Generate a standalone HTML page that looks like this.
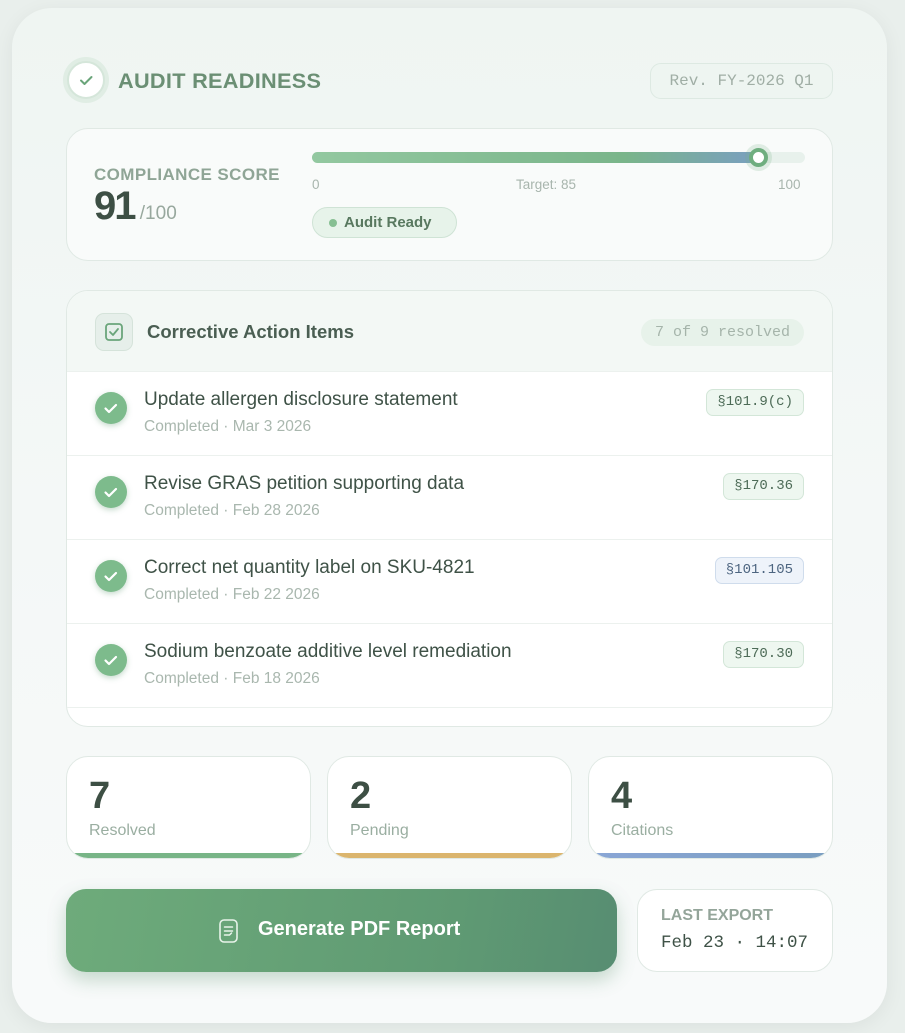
<!DOCTYPE html>
<html><head><meta charset="utf-8"><style>
*{box-sizing:border-box;margin:0;padding:0}
body{width:905px;height:1033px;background:#e9efec;font-family:"Liberation Sans",sans-serif;position:relative;overflow:hidden}
.card{position:absolute;left:12px;top:8px;width:875px;height:1015px;border-radius:40px;background:linear-gradient(180deg,#eff5f2 0%,#f4f8f7 50%,#f8fafa 100%);box-shadow:0 4px 20px rgba(0,0,0,.06)}
.abs{position:absolute}
.mono{font-family:"Liberation Mono",monospace}
.box{position:absolute;background:#fff;border:1px solid #e0e9e4;border-radius:22px}
.row{position:absolute;left:0;width:100%;height:84px;border-top:1px solid #ecf1ee}
.chk{position:absolute;left:28px;top:20px;width:32px;height:32px;border-radius:50%;background:#7dbb8c;box-shadow:0 2px 6px rgba(90,150,110,.35)}
.rt{position:absolute;left:77px;top:17px;font-size:19px;color:#3f5247}
.rs{position:absolute;left:77px;top:46px;font-size:15.5px;color:#a9b7ae}
.bd{position:absolute;right:28px;top:17px;height:27px;padding:0 10px;border:1px solid #d3e6d8;background:#eef7f0;border-radius:7px;font-size:14px;line-height:25px;color:#4d6b57}
.stat{position:absolute;top:756px;width:245px;height:103px;background:#fff;border:1px solid #e0e9e4;border-radius:22px;overflow:hidden}
.stat .n{position:absolute;left:22px;top:18px;font-size:38px;font-weight:bold;color:#3d4f44}
.stat .l{position:absolute;left:22px;top:65px;font-size:16px;color:#9aaea1}
.stat .b{position:absolute;left:0;right:0;bottom:0;height:5px}
</style></head><body>
<div class="card"></div>
<div class="abs" style="left:67px;top:61px;width:38px;height:38px;border-radius:50%;background:#fff;border:2px solid #d5e6da;box-shadow:0 0 0 4px rgba(200,225,205,.4)">
<svg width="34" height="34" viewBox="0 0 34 34" style="position:absolute;left:0;top:0"><path d="M12 17.5l3.5 3.5 7-7" fill="none" stroke="#6aa57a" stroke-width="2" stroke-linecap="round" stroke-linejoin="round"/></svg></div>
<div class="abs" style="left:118px;top:68px;font-size:21.7px;font-weight:bold;color:#6b8f74;letter-spacing:.3px">AUDIT READINESS</div>
<div class="abs mono" style="left:650px;top:63px;width:183px;height:36px;border:1px solid #dde9e2;border-radius:11px;background:#eef5f1;font-size:16px;color:#a0aea5;line-height:34px;text-align:center">Rev. FY-2026 Q1</div>

<div class="box" style="left:66px;top:128px;width:767px;height:133px;background:#f9fbfa"></div>
<div class="abs" style="left:94px;top:165px;font-size:17px;font-weight:bold;color:#8fa596;letter-spacing:.4px">COMPLIANCE SCORE</div>
<div class="abs" style="left:94px;top:184px;font-size:40px;font-weight:bold;color:#3d4f44;letter-spacing:-2px">91<span style="font-size:19px;font-weight:normal;color:#98a89e;letter-spacing:0"> /100</span></div>
<div class="abs" style="left:312px;top:152px;width:493px;height:11px;border-radius:6px;background:#e8f1ec"></div>
<div class="abs" style="left:312px;top:152px;width:446px;height:11px;border-radius:6px;background:linear-gradient(90deg,#93c8a0,#7ab58a 70%,#7a9fc0)"></div>
<div class="abs" style="left:749px;top:148px;width:19px;height:19px;border-radius:50%;background:#fff;border:4px solid #6fae7f;box-shadow:0 0 0 4px rgba(120,180,135,.2)"></div>
<div class="abs" style="left:312px;top:177px;font-size:13.5px;color:#a8b5ad">0</div>
<div class="abs" style="left:516px;top:177px;font-size:13.5px;color:#a8b5ad">Target: 85</div>
<div class="abs" style="left:778px;top:177px;font-size:13.5px;color:#a8b5ad">100</div>
<div class="abs" style="left:312px;top:207px;width:145px;height:31px;border-radius:16px;background:#e7f3ea;border:1px solid #cfe3d5;font-size:15px;font-weight:bold;color:#58785f;line-height:29px;padding-left:31px"><span style="position:absolute;left:16px;top:11px;width:8px;height:8px;border-radius:50%;background:#86bf92"></span>Audit Ready</div>

<div class="box" style="left:66px;top:290px;width:767px;height:437px;overflow:hidden">
 <div style="position:absolute;left:0;top:0;width:100%;height:80px;background:#f3f8f5"></div>
 <div style="position:absolute;left:28px;top:22px;width:38px;height:38px;border-radius:9px;background:#e6efea;border:1px solid #d5e3da">
 <svg width="38" height="38" viewBox="0 0 38 38" style="position:absolute;left:-1px;top:-1px"><rect x="11" y="11" width="16" height="16" rx="3" fill="none" stroke="#6aa57a" stroke-width="1.8"/><path d="M15 19l3 3 5-6" fill="none" stroke="#6aa57a" stroke-width="1.8" stroke-linecap="round" stroke-linejoin="round"/></svg></div>
 <div style="position:absolute;left:80px;top:30px;font-size:18.5px;font-weight:bold;color:#4a5e52">Corrective Action Items</div>
 <div class="mono" style="position:absolute;right:28px;top:28px;height:27px;padding:0 14px;border-radius:14px;background:#e7f2ea;font-size:15px;line-height:27px;color:#a5b4aa">7 of 9 resolved</div>
 <div class="row" style="top:80px"><div class="chk"></div><svg class="abs" style="left:28px;top:20px" width="32" height="32"><path d="M10.5 16.5l3.5 3.5 7-7" fill="none" stroke="#fff" stroke-width="2.2" stroke-linecap="round" stroke-linejoin="round"/></svg><div class="rt">Update allergen disclosure statement</div><div class="rs">Completed · Mar 3 2026</div><div class="bd mono">§101.9(c)</div></div>
 <div class="row" style="top:164px"><div class="chk"></div><svg class="abs" style="left:28px;top:20px" width="32" height="32"><path d="M10.5 16.5l3.5 3.5 7-7" fill="none" stroke="#fff" stroke-width="2.2" stroke-linecap="round" stroke-linejoin="round"/></svg><div class="rt">Revise GRAS petition supporting data</div><div class="rs">Completed · Feb 28 2026</div><div class="bd mono">§170.36</div></div>
 <div class="row" style="top:248px"><div class="chk"></div><svg class="abs" style="left:28px;top:20px" width="32" height="32"><path d="M10.5 16.5l3.5 3.5 7-7" fill="none" stroke="#fff" stroke-width="2.2" stroke-linecap="round" stroke-linejoin="round"/></svg><div class="rt">Correct net quantity label on SKU-4821</div><div class="rs">Completed · Feb 22 2026</div><div class="bd mono" style="background:#eef3fa;border-color:#cfdcec;color:#4d6580">§101.105</div></div>
 <div class="row" style="top:332px"><div class="chk"></div><svg class="abs" style="left:28px;top:20px" width="32" height="32"><path d="M10.5 16.5l3.5 3.5 7-7" fill="none" stroke="#fff" stroke-width="2.2" stroke-linecap="round" stroke-linejoin="round"/></svg><div class="rt">Sodium benzoate additive level remediation</div><div class="rs">Completed · Feb 18 2026</div><div class="bd mono">§170.30</div></div>
 <div class="row" style="top:416px"></div>
</div>

<div class="stat" style="left:66px"><div class="n">7</div><div class="l">Resolved</div><div class="b" style="background:#78b587"></div></div>
<div class="stat" style="left:327px"><div class="n">2</div><div class="l">Pending</div><div class="b" style="background:#dbb56e"></div></div>
<div class="stat" style="left:588px"><div class="n">4</div><div class="l">Citations</div><div class="b" style="background:linear-gradient(90deg,#8aa6d6,#7a9ec0)"></div></div>

<div class="abs" style="left:66px;top:889px;width:551px;height:83px;border-radius:20px;background:linear-gradient(100deg,#6eab7b,#5f9a73 70%,#578d72);box-shadow:0 8px 18px rgba(80,140,100,.3)"></div>
<svg class="abs" style="left:217px;top:918px" width="24" height="26" viewBox="0 0 24 26"><rect x="3" y="2" width="17" height="22" rx="4" fill="none" stroke="#e8f3ea" stroke-width="1.6"/><path d="M7.5 9h8M7.5 13h8M7.5 17h5l2-2" fill="none" stroke="#e8f3ea" stroke-width="1.5" stroke-linecap="round"/></svg>
<div class="abs" style="left:258px;top:918px;font-size:20px;font-weight:bold;color:#fff">Generate PDF Report</div>
<div class="box" style="left:637px;top:889px;width:196px;height:83px;border-radius:20px"></div>
<div class="abs" style="left:661px;top:907px;font-size:16px;font-weight:bold;color:#94a59a">LAST EXPORT</div>
<div class="abs mono" style="left:661px;top:933px;font-size:17.5px;color:#3f5247">Feb 23 · 14:07</div>
</body></html>
